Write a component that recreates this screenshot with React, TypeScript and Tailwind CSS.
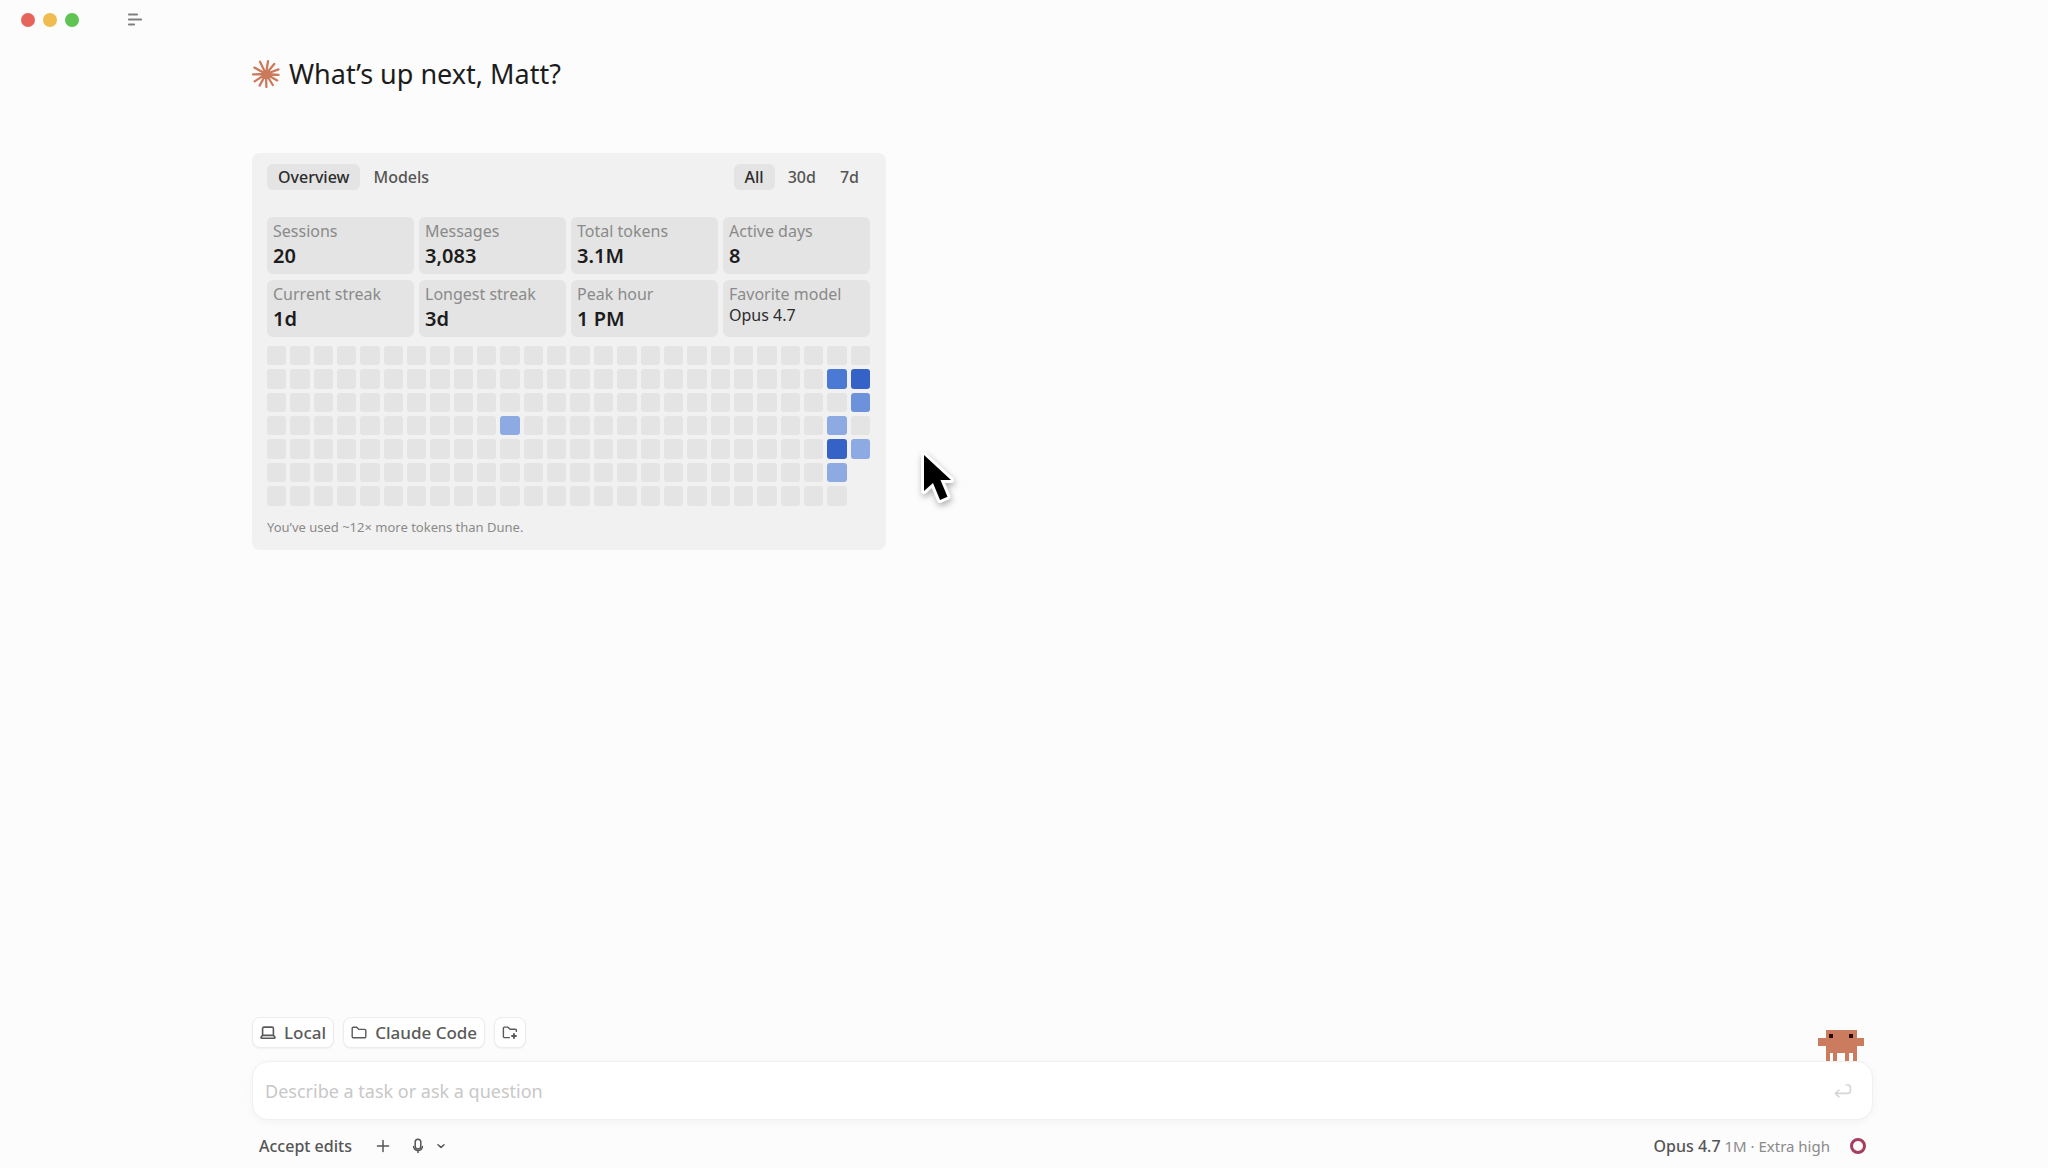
import React, { useState } from "react";

const stats = [
  { label: "Sessions", value: "20" },
  { label: "Messages", value: "3,083" },
  { label: "Total tokens", value: "3.1M" },
  { label: "Active days", value: "8" },
  { label: "Current streak", value: "1d" },
  { label: "Longest streak", value: "3d" },
  { label: "Peak hour", value: "1 PM" },
  { label: "Favorite model", value: "Opus 4.7", small: true },
];

const COLUMNS = 26;
const LAST_DAY = 4; // last filled row of the final week

// "column-row" -> level
const activity: Record<string, number> = {
  "10-3": 1,
  "24-1": 3,
  "24-3": 1,
  "24-4": 4,
  "24-5": 1,
  "25-1": 4,
  "25-2": 2,
  "25-4": 1,
};

const levelColors = ["bg-[#e4e4e4]", "bg-[#8eaae2]", "bg-[#6b92db]", "bg-[#4a7ad4]", "bg-[#3462c6]"];

const Starburst: React.FC = () => (
  <svg className="h-7 w-7" viewBox="0 0 28 28" fill="none" stroke="#cc7a5c" strokeWidth="2.3" strokeLinecap="round">
    <path d="M14 14 8 1.8M14 14 16 1.2M14 14 22.2 4M14 14 26.5 9.4M14 14 26.6 14.8M14 14 25.2 20.4M14 14 20.8 25M14 14 14.4 27M14 14 7.6 25.6M14 14 2.6 21.4M14 14 1 14.4M14 14 2.4 7.6" />
    <circle cx="14" cy="14" r="3.8" fill="#cc7a5c" stroke="none" />
  </svg>
);

const LaptopIcon: React.FC = () => (
  <svg className="h-4 w-4" viewBox="0 0 16 16" fill="none" stroke="currentColor" strokeWidth="1.6" strokeLinejoin="round">
    <path d="M2.6 10.4V3.4a1.3 1.3 0 0 1 1.3-1.3h8.2a1.3 1.3 0 0 1 1.3 1.3v7" />
    <path d="M2.6 10.4h10.8l1.6 1.8v.3a.8.8 0 0 1-.8.8H1.8a.8.8 0 0 1-.8-.8v-.3z" />
  </svg>
);

const FolderIcon: React.FC = () => (
  <svg className="h-4 w-4" viewBox="0 0 16 16" fill="none" stroke="currentColor" strokeWidth="1.4" strokeLinejoin="round">
    <path d="M1.2 3.2a1 1 0 0 1 1-1h3.5L8 4.4h5.6a1.2 1.2 0 0 1 1.2 1.2v6a1.2 1.2 0 0 1-1.2 1.2H2.4a1.2 1.2 0 0 1-1.2-1.2z" />
  </svg>
);

const FolderPlusIcon: React.FC = () => (
  <svg className="h-4 w-4" viewBox="0 0 16 16" fill="none" stroke="currentColor" strokeWidth="1.4" strokeLinejoin="round" strokeLinecap="round">
    <path d="M7.4 12.6H2.6a1.2 1.2 0 0 1-1.2-1.2V3.1a1 1 0 0 1 1-1h3.3L8 4.2h5.2a1.2 1.2 0 0 1 1.2 1.2v1" />
    <path d="M12 9v4M10 11h4" strokeWidth="1.9" />
  </svg>
);

const MicIcon: React.FC = () => (
  <svg className="h-4 w-4" viewBox="0 0 16 16" fill="none" stroke="currentColor" strokeWidth="1.5" strokeLinecap="round">
    <path d="M5.2 4a2.8 2.8 0 0 1 5.6 0v4.2a2.8 2.8 0 0 1-5.6 0z" />
    <path d="M3.6 8.6a4.4 4 0 0 0 8.8 0M8 12.8v1.6" />
  </svg>
);

const ReturnIcon: React.FC = () => (
  <svg className="h-4 w-[18px]" viewBox="0 0 18 16" fill="none" stroke="currentColor" strokeWidth="1.6" strokeLinecap="round" strokeLinejoin="round">
    <path d="M5 7 1.4 10.4 5 13.8M1.4 10.4h12.4a2.6 2.6 0 0 0 2.6-2.6V4.6A2.6 2.6 0 0 0 13.8 2h-1.6" />
  </svg>
);

const Mascot: React.FC = () => (
  <svg className="mr-[9px] h-[31px] w-[46px]" viewBox="0 0 46 31" shapeRendering="crispEdges">
    <path
      fill="#cb7b5e"
      d="M8 0h31v8h7v8h-7v15h-4v-8h-4v8h-4v-8h-8v8h-4v-8h-3v8H8V16H0V8h8z"
    />
    <path fill="#2b0d08" d="M11 4h4v4h-4zM31 4h4v4h-4z" />
  </svg>
);

const Cursor: React.FC = () => (
  <svg
    className="pointer-events-none absolute top-[447px] left-[916px] h-[62px] w-[44px] drop-shadow-[1px_3px_3px_rgba(0,0,0,0.3)]"
    viewBox="0 0 44 62"
  >
    <path
      d="M8 8v36l9-8 7 17 7.5-3.3-7-16.7H35z"
      fill="#000"
      stroke="#fff"
      strokeWidth="6"
      strokeLinejoin="round"
      paintOrder="stroke"
    />
  </svg>
);

type TabProps = {
  label: string;
  active: boolean;
  onClick: () => void;
};

const Tab: React.FC<TabProps> = ({ label, active, onClick }) => (
  <button
    type="button"
    onClick={onClick}
    className={`h-[26px] rounded-md px-[11px] text-base leading-6 font-medium ${
      active ? "bg-[#e4e4e4] text-[#2c2c2c]" : "text-[#555555]"
    }`}
  >
    {label}
  </button>
);

const UsageCard: React.FC = () => {
  const [view, setView] = useState("Overview");
  const [range, setRange] = useState("All");

  return (
    <section className="w-[634px] rounded-lg bg-[#f1f1f1] pt-[11px] pr-4 pb-[13px] pl-[15px]">
      <div className="flex items-center justify-between">
        <div className="flex gap-0.5">
          {["Overview", "Models"].map((name) => (
            <Tab key={name} label={name} active={view === name} onClick={() => setView(name)} />
          ))}
        </div>
        <div className="flex gap-0.5">
          {["All", "30d", "7d"].map((name) => (
            <Tab key={name} label={name} active={range === name} onClick={() => setRange(name)} />
          ))}
        </div>
      </div>

      <dl className="mt-[27px] grid grid-cols-4 gap-x-[5px] gap-y-1.5">
        {stats.map((stat) => (
          <div key={stat.label} className="h-[57px] rounded-md bg-[#e4e4e4] px-1.5 pt-1">
            <dt className="text-base leading-5 text-[#8a8a8a]">{stat.label}</dt>
            <dd
              className={
                stat.small
                  ? "text-base leading-[23px] text-[#2c2c2c]"
                  : "text-xl leading-[29px] font-semibold text-[#1c1c1c]"
              }
            >
              {stat.value}
            </dd>
          </div>
        ))}
      </dl>

      <div className="mt-[9px] grid grid-flow-col grid-cols-26 grid-rows-7 gap-1">
        {Array.from({ length: COLUMNS * 7 }, (_, i) => {
          const col = Math.floor(i / 7);
          const row = i % 7;
          if (col === COLUMNS - 1 && row > LAST_DAY) return null;
          return (
            <div
              key={i}
              className={`aspect-square rounded-[3px] ${levelColors[activity[`${col}-${row}`] ?? 0]}`}
            />
          );
        })}
      </div>

      <p className="mt-[11px] text-[13px] leading-5 text-[#8a8a8a]">You’ve used ~12× more tokens than Dune.</p>
    </section>
  );
};

const chip =
  "flex h-[31px] items-center gap-2 rounded-lg border border-[#ececec] bg-white px-[7px] text-[17px] font-medium text-[#5a5a5a] shadow-xs";

const App: React.FC = () => {
  const [task, setTask] = useState("");

  return (
    <div className="relative flex min-h-screen flex-col bg-[#fcfcfc] font-['Noto_Sans',sans-serif] text-[#1c1c1c]">
      <header className="flex h-[39px] items-center pl-[21px]">
        <div className="flex gap-2">
          <span className="h-3.5 w-3.5 rounded-full bg-[#e5645c]" />
          <span className="h-3.5 w-3.5 rounded-full bg-[#f0bb4f]" />
          <span className="h-3.5 w-3.5 rounded-full bg-[#5fc454]" />
        </div>
        <button type="button" aria-label="Toggle sidebar" className="ml-12 text-[#808080]">
          <svg className="h-4 w-4" viewBox="0 0 16 16" stroke="currentColor" strokeWidth="2.2" strokeLinecap="round">
            <path d="M2 2.5h8M2 7.5h12M2 12.5h5" />
          </svg>
        </button>
      </header>

      <main className="flex flex-1 flex-col pr-[175px] pl-[252px]">
        <div className="mt-[17px] flex h-9 items-center gap-[9px]">
          <Starburst />
          <h1 className="text-[27px] leading-9">What’s up next, Matt?</h1>
        </div>

        <div className="mt-[61px]">
          <UsageCard />
        </div>

        <form className="mt-auto" onSubmit={(e) => e.preventDefault()}>
          <div className="flex items-end justify-between">
            <div className="mb-[13px] flex gap-[9px]">
              <button type="button" className={chip}>
                <LaptopIcon />
                Local
              </button>
              <button type="button" className={chip}>
                <FolderIcon />
                Claude Code
              </button>
              <button type="button" aria-label="Add folder" className={chip}>
                <FolderPlusIcon />
              </button>
            </div>
            <Mascot />
          </div>

          <div className="flex h-[59px] items-center rounded-2xl border border-[#f0f0f0] bg-white pr-5 pl-3 shadow-[0_2px_8px_rgba(0,0,0,0.04)]">
            <input
              type="text"
              aria-label="Task"
              className="flex-1 bg-transparent text-lg outline-none placeholder:text-[#c8c8c8]"
              placeholder="Describe a task or ask a question"
              value={task}
              onChange={(e) => setTask(e.target.value)}
            />
            <button type="submit" aria-label="Send" className="text-[#d6d6d6]">
              <ReturnIcon />
            </button>
          </div>

          <div className="mt-[11px] mb-[7px] flex h-[30px] items-center justify-between pr-[7px] pl-[7px] text-base text-[#8a8a8a]">
            <div className="flex items-center text-[#555555]">
              <button type="button" className="font-medium">
                Accept edits
              </button>
              <button type="button" aria-label="Add" className="ml-6">
                <svg className="h-3.5 w-3.5" viewBox="0 0 14 14" stroke="currentColor" strokeWidth="1.5" strokeLinecap="round">
                  <path d="M7 1.5v11M1.5 7h11" />
                </svg>
              </button>
              <button type="button" aria-label="Dictate" className="ml-5">
                <MicIcon />
              </button>
              <button type="button" aria-label="Microphone options" className="ml-2.5">
                <svg className="h-2.5 w-2.5" viewBox="0 0 10 10" fill="none" stroke="currentColor" strokeWidth="1.5" strokeLinecap="round" strokeLinejoin="round">
                  <path d="M2 3.8 5 6.4 8 3.8" />
                </svg>
              </button>
            </div>
            <div className="flex items-center gap-5">
              <button type="button" className="text-[15px]">
                <span className="text-base font-medium text-[#555555]">Opus 4.7</span> 1M · Extra high
              </button>
              <button
                type="button"
                aria-label="Context usage"
                className="h-4 w-4 rounded-full border-[3px] border-[#a83e5e]"
              />
            </div>
          </div>
        </form>
      </main>

      <Cursor />
    </div>
  );
};

export default App;
